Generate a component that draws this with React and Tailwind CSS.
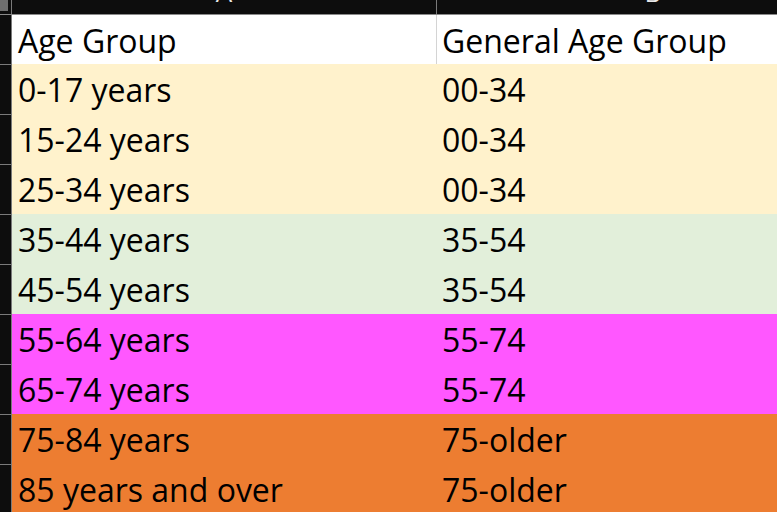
const rows = [
  { a: "0-17 years", b: "00-34", bg: "bg-[#fff2cc]" },
  { a: "15-24 years", b: "00-34", bg: "bg-[#fff2cc]" },
  { a: "25-34 years", b: "00-34", bg: "bg-[#fff2cc]" },
  { a: "35-44 years", b: "35-54", bg: "bg-[#e2efda]" },
  { a: "45-54 years", b: "35-54", bg: "bg-[#e2efda]" },
  { a: "55-64 years", b: "55-74", bg: "bg-[#ff57ff]" },
  { a: "65-74 years", b: "55-74", bg: "bg-[#ff57ff]" },
  { a: "75-84 years", b: "75-older", bg: "bg-[#ed7d31]" },
  { a: "85 years and over", b: "75-older", bg: "bg-[#ed7d31]" },
];

const Row = ({ a, b, bg, first }) => (
  <div className={`flex ${first ? "h-[49px]" : "h-[50px]"} shrink-0`}>
    <div className={`w-[11px] shrink-0 bg-[#0d0d0d] ${first ? "" : "border-t border-[#7a7a7a]"}`} />
    <div className="w-px shrink-0 bg-[#7a7a7a]" />
    <div className={`flex flex-1 overflow-hidden ${bg}`}>
      <div className="w-[424px] shrink-0 pl-[6px] pt-[2px] leading-[48px]">{a}</div>
      <div className={`w-px shrink-0 ${first ? "bg-[#d4d4d4]" : ""}`} />
      <div className="flex-1 pl-[5px] pt-[2px] leading-[48px]">{b}</div>
    </div>
  </div>
);

export default function App() {
  return (
    <div
      className="w-[777px] h-[512px] overflow-hidden bg-[#0d0d0d] flex flex-col text-[32px] text-black"
      style={{ fontFamily: '"Open Sans", "Noto Sans", sans-serif' }}
    >
      {/* column header strip */}
      <div className="flex h-[14px] shrink-0 overflow-hidden bg-[#0d0d0d]">
        <div className="w-[11px] shrink-0">
          <div className="w-[8px] h-[11px] bg-[#6e6e6e]" />
        </div>
        <div className="w-px shrink-0 bg-[#7a7a7a]" />
        <div className="w-[424px] shrink-0 flex justify-center">
          <span className="text-[26px] leading-none text-[#e8e8e8] -translate-y-[21px]">A</span>
        </div>
        <div className="w-px shrink-0 bg-[#7a7a7a]" />
        <div className="w-[432px] shrink-0 flex justify-center">
          <span className="text-[26px] leading-none text-[#e8e8e8] -translate-y-[21px]">B</span>
        </div>
      </div>
      <div className="h-px shrink-0 bg-[#8a8a8a]" />
      <Row a="Age Group" b="General Age Group" bg="bg-white" first />
      {rows.map((r, i) => (
        <Row key={i} {...r} />
      ))}
    </div>
  );
}
